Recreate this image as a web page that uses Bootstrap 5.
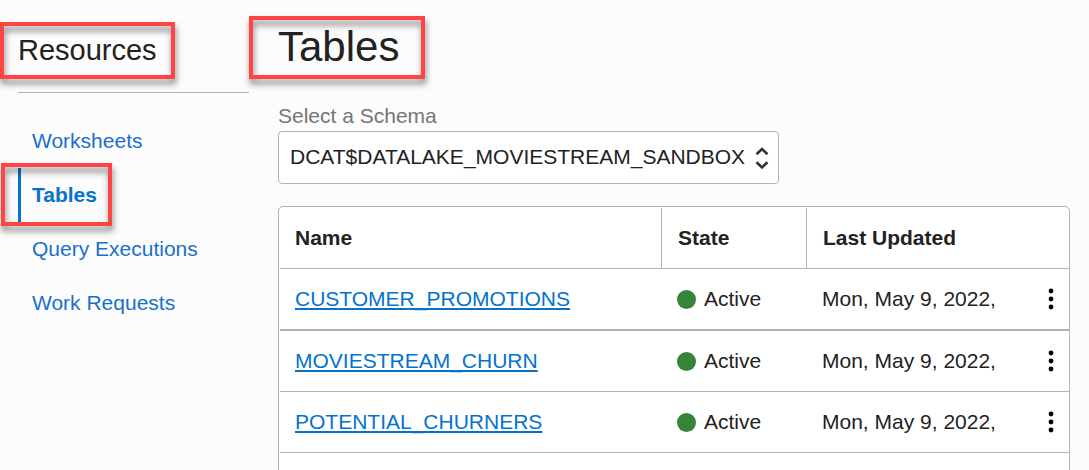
<!DOCTYPE html>
<html lang="en">
<head>
<meta charset="utf-8">
<meta name="viewport" content="width=device-width, initial-scale=1">
<title>Tables</title>
<link href="https://cdn.jsdelivr.net/npm/bootstrap@5.3.0/dist/css/bootstrap.min.css" rel="stylesheet">
<style>
  :root { --line: #afb4be; --ink: #222; --blue: #0572ce; --call: #ff4444; }
  body { font-family: "Liberation Sans", Arial, sans-serif; font-size: 21px; line-height: 24px; color: var(--ink); background: #fcfcfc; }
  .shell { height: 100vh; padding: 0 19px 0 18px; column-gap: 29px; }
  .side { width: 231px; flex: none; }
  .side-title { font-size: 29px; line-height: 36px; font-weight: 400; padding: 32px 0 24px; margin: 0 0 21px; border-bottom: 1px solid var(--line); }
  .side .nav-link { color: #1a70c9; padding: 15px 14px; line-height: 24px; }
  .side .nav-link.active { color: var(--blue); font-weight: 700; border-left: 3px solid var(--blue); padding-left: 11px; }
  .page-title { font-size: 42px; line-height: 48px; font-weight: 400; padding: 23px 0; margin: 0; }
  .schema-label { color: #757575; margin-bottom: 3px; line-height: 24px; padding-top: 10px; }
  .schema-select { width: 501px; max-width: 100%; height: 53px; padding: 0 32px 2px 11px; font-size: 21px; line-height: 24px; color: var(--ink); border: 1px solid var(--line); border-radius: 4px; background-color: #fff; background-size: 14px 22px; background-position: right 9px center;
    background-image: url("data:image/svg+xml,%3Csvg xmlns='http://www.w3.org/2000/svg' viewBox='0 0 14 22' fill='none' stroke='%23333' stroke-width='2.6'%3E%3Cpath d='M1.5 7.200 7 2l5.500 5.200M1.500 15.200 7 20.400l5.500-5.200'/%3E%3C/svg%3E"); }
  .grid-frame { margin-top: 22px; border: 1px solid var(--line); border-radius: 5px; padding: 1px 0 0 1px; background: #fff; }
  .data-grid { table-layout: fixed; width: 100%; border-collapse: separate; border-spacing: 0; }
  .data-grid th, .data-grid td { height: 61px; padding: 0 15px; border-bottom: 1px solid var(--line); vertical-align: middle; white-space: nowrap; }
  .data-grid th + th { border-left: 1px solid var(--line); }
  .data-grid td + td, .data-grid th + th { padding-left: 16px; }
  .data-grid tbody tr:first-child td { height: 62px; border-bottom-width: 2px; }
  .col-name { width: 381px; }
  .col-state { width: 145px; }
  .data-grid a { color: var(--blue); text-decoration: underline 2px; text-underline-offset: 2px; text-decoration-skip-ink: none; }
  .dot { width: 19px; height: 19px; border-radius: 50%; background: #358539; }
  .kebab { border: 0; background: none; padding: 0; line-height: 0; }
  .callout { position: absolute; border: 4px solid var(--call); filter: drop-shadow(1px 5px 3px rgba(0,0,0,.5)); pointer-events: none; z-index: 2; }
  .call-side { inset: 22px 74px 13px -18px; }
  .call-nav { inset: -5px auto -4px -17px; width: 111px; }
  .call-page { inset: 16px auto 15px -29px; width: 176px; }
</style>
</head>
<body>
<div class="shell d-flex overflow-hidden">
  <aside class="side">
    <h2 class="side-title position-relative">Resources<span class="callout call-side"></span></h2>
    <nav class="nav flex-column" aria-label="Resources">
      <a class="nav-link" href="#">Worksheets</a>
      <div class="position-relative">
        <a class="nav-link active" href="#" aria-current="page">Tables</a>
        <span class="callout call-nav"></span>
      </div>
      <a class="nav-link" href="#">Query Executions</a>
      <a class="nav-link" href="#">Work Requests</a>
    </nav>
  </aside>
  <main class="flex-grow-1">
    <h1 class="page-title position-relative">Tables<span class="callout call-page"></span></h1>
    <label class="schema-label d-block" for="schema">Select a Schema</label>
    <select class="form-select schema-select" id="schema">
      <option>DCAT$DATALAKE_MOVIESTREAM_SANDBOX</option>
    </select>
    <div class="grid-frame">
      <table class="data-grid">
        <thead>
          <tr><th class="col-name" scope="col">Name</th><th class="col-state" scope="col">State</th><th scope="col">Last Updated</th></tr>
        </thead>
        <tbody>
          <tr>
            <td><a href="#">CUSTOMER_PROMOTIONS</a></td>
            <td><div class="d-flex align-items-center gap-2"><span class="dot"></span>Active</div></td>
            <td><div class="d-flex align-items-center justify-content-between">Mon, May 9, 2022,
              <button class="kebab" type="button" aria-label="Actions"><svg width="6" height="22" viewBox="0 0 6 22"><circle cx="3" cy="3" r="2.400"/><circle cx="3" cy="11" r="2.400"/><circle cx="3" cy="19" r="2.400"/></svg></button></div></td>
          </tr>
          <tr>
            <td><a href="#">MOVIESTREAM_CHURN</a></td>
            <td><div class="d-flex align-items-center gap-2"><span class="dot"></span>Active</div></td>
            <td><div class="d-flex align-items-center justify-content-between">Mon, May 9, 2022,
              <button class="kebab" type="button" aria-label="Actions"><svg width="6" height="22" viewBox="0 0 6 22"><circle cx="3" cy="3" r="2.400"/><circle cx="3" cy="11" r="2.400"/><circle cx="3" cy="19" r="2.400"/></svg></button></div></td>
          </tr>
          <tr>
            <td><a href="#">POTENTIAL_CHURNERS</a></td>
            <td><div class="d-flex align-items-center gap-2"><span class="dot"></span>Active</div></td>
            <td><div class="d-flex align-items-center justify-content-between">Mon, May 9, 2022,
              <button class="kebab" type="button" aria-label="Actions"><svg width="6" height="22" viewBox="0 0 6 22"><circle cx="3" cy="3" r="2.400"/><circle cx="3" cy="11" r="2.400"/><circle cx="3" cy="19" r="2.400"/></svg></button></div></td>
          </tr>
          <tr><td></td><td></td><td></td></tr>
        </tbody>
      </table>
    </div>
  </main>
</div>
<script src="https://cdn.jsdelivr.net/npm/bootstrap@5.3.0/dist/js/bootstrap.bundle.min.js"></script>
</body>
</html>
